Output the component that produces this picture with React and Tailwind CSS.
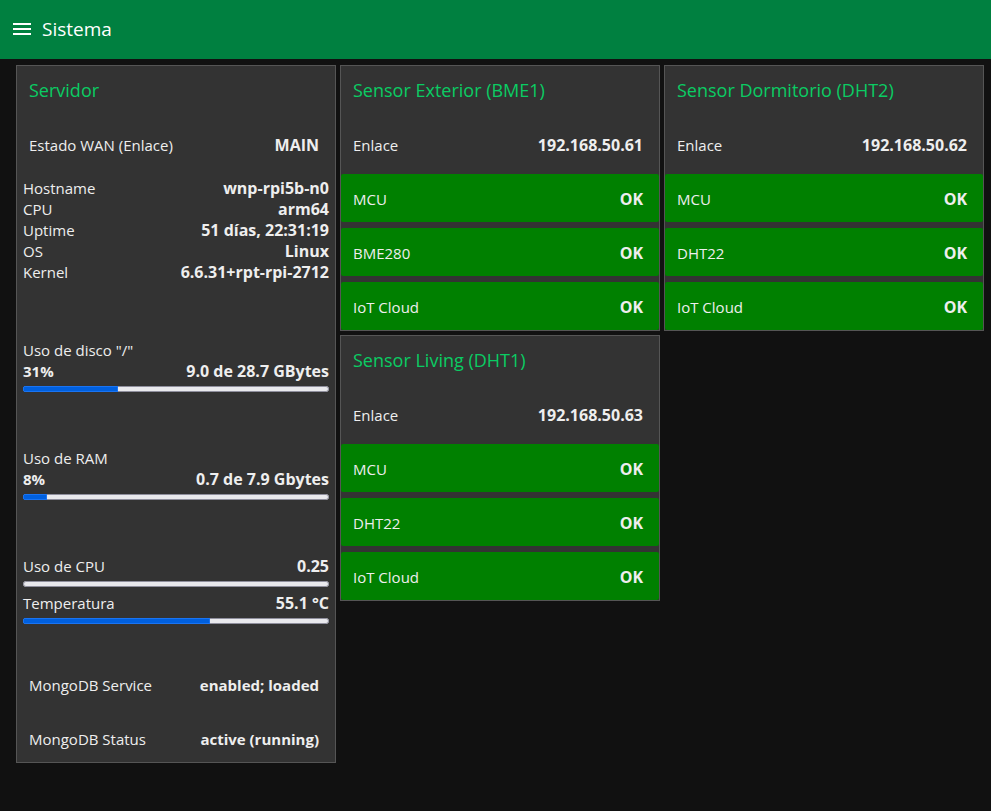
const sensors = [
  { title: "Sensor Exterior (BME1)", ip: "192.168.50.61", parts: ["MCU", "BME280", "IoT Cloud"] },
  { title: "Sensor Dormitorio (DHT2)", ip: "192.168.50.62", parts: ["MCU", "DHT22", "IoT Cloud"] },
  { title: "Sensor Living (DHT1)", ip: "192.168.50.63", parts: ["MCU", "DHT22", "IoT Cloud"] },
];

const info = [
  ["Hostname", "wnp-rpi5b-n0"],
  ["CPU", "arm64"],
  ["Uptime", "51 días, 22:31:19"],
  ["OS", "Linux"],
  ["Kernel", "6.6.31+rpt-rpi-2712"],
];

function Card({ title, className = "", children }) {
  return (
    <section className={`flex flex-col gap-1.5 border border-[#555555] bg-[#333333] ${className}`}>
      <h2 className="flex h-12 items-center px-3 text-lg text-[#0acc63]">{title}</h2>
      {children}
    </section>
  );
}

function Row({ label, value, ok = false, small = false }) {
  return (
    <div className={`flex h-12 items-center justify-between rounded-xs pt-0.5 pr-4 pl-3 ${ok ? "bg-[#008000]" : ""}`}>
      <span>{label}</span>
      <span className={`font-bold leading-[21px] ${small ? "text-[15px]" : "text-[16px]"}`}>{value}</span>
    </div>
  );
}

function Pair({ label, value, strong = false }) {
  return (
    <div className="flex h-[21px] items-baseline justify-between">
      <span className={strong ? "font-bold" : ""}>{label}</span>
      <span className="text-[16px] leading-[21px] font-bold">{value}</span>
    </div>
  );
}

function Bar({ label, value, max = 100 }) {
  return (
    <progress
      aria-label={label}
      value={value}
      max={max}
      className="my-1 block h-1.5 w-full appearance-none overflow-hidden rounded-[3px] border-0 [&::-webkit-progress-bar]:rounded-[3px] [&::-webkit-progress-bar]:bg-[#e9e9ed] [&::-webkit-progress-bar]:shadow-[inset_0_0_0_1px_#8f8f9d] [&::-webkit-progress-value]:bg-[#0060df] [&::-webkit-progress-value]:shadow-[inset_0_0_0_1px_#1a74f2]"
    />
  );
}

export default function App() {
  return (
    <div className="min-h-screen bg-[#111111] font-['Open_Sans','Noto_Sans',sans-serif] text-[15px] leading-[21px] text-[#eeeeee]">
      <header className="flex h-[59px] items-center gap-2 bg-[#008040] px-2.5 pb-px text-white">
        <button type="button" aria-label="Menú">
          <svg viewBox="0 0 24 24" className="size-6 fill-current" aria-hidden="true">
            <path d="M3 18h18v-2H3v2zm0-5h18v-2H3v2zm0-7v2h18V6H3z" />
          </svg>
        </button>
        <h1 className="text-[19px]">Sistema</h1>
      </header>

      <main className="grid grid-cols-[repeat(auto-fill,320px)] grid-rows-[auto_auto_1fr] items-start gap-1 pt-1.5 pr-1 pl-4">
        <Card title="Servidor" className="row-span-3">
          <Row label="Estado WAN (Enlace)" value="MAIN" />
          <div className="h-39 px-1.5 pt-1">
            {info.map(([label, value]) => (
              <Pair key={label} label={label} value={value} />
            ))}
          </div>
          <div className="h-[102px] px-1.5 pt-1">
            <p>Uso de disco "/"</p>
            <Pair label="31%" value="9.0 de 28.7 GBytes" strong />
            <Bar label="Uso de disco" value={31} />
          </div>
          <div className="h-[102px] px-1.5 pt-1">
            <p>Uso de RAM</p>
            <Pair label="8%" value="0.7 de 7.9 Gbytes" strong />
            <Bar label="Uso de RAM" value={8} />
          </div>
          <div className="h-[102px] px-1.5 pt-1">
            <Pair label="Uso de CPU" value="0.25" />
            <Bar label="Uso de CPU" value={0} />
            <div className="pt-0.5">
              <Pair label="Temperatura" value="55.1 °C" />
              <Bar label="Temperatura" value={55.1} max={90} />
            </div>
          </div>
          <Row label="MongoDB Service" value="enabled; loaded" small />
          <Row label="MongoDB Status" value="active (running)" small />
        </Card>

        {sensors.map((sensor) => (
          <Card key={sensor.title} title={sensor.title}>
            <Row label="Enlace" value={sensor.ip} />
            {sensor.parts.map((part) => (
              <Row key={part} label={part} value="OK" ok />
            ))}
          </Card>
        ))}
      </main>
    </div>
  );
}
